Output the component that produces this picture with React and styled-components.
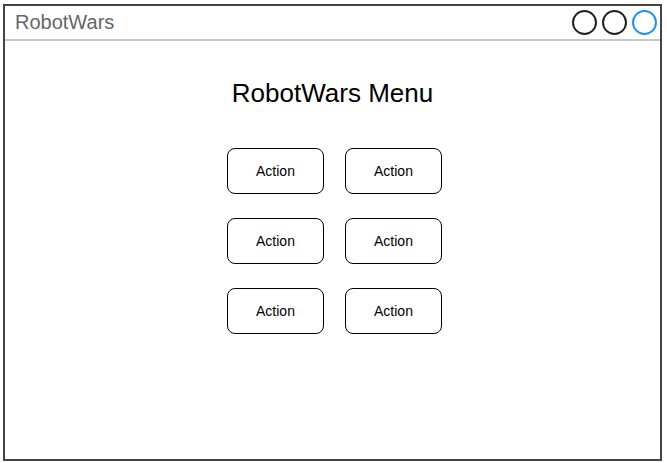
import React from "react";
import styled, { createGlobalStyle } from "styled-components";

const GlobalStyle = createGlobalStyle`
  body {
    margin: 0;
    background: #fff;
    font-family: "Liberation Sans", Arial, sans-serif;
  }
`;

const Page = styled.div`
  padding: 4px 0 0 3px;
`;

const Window = styled.div`
  width: 659px;
  height: 457px;
  box-sizing: border-box;
  border: 2px solid #444;
  display: flex;
  flex-direction: column;
`;

const TitleBar = styled.div`
  height: 35px;
  box-sizing: border-box;
  border-bottom: 2px solid #c8c8c8;
  display: flex;
  align-items: center;
  justify-content: space-between;
  padding: 0 3px 0 10px;
`;

const Title = styled.span`
  font-size: 20px;
  line-height: 23px;
  color: #666;
`;

const Controls = styled.div`
  display: flex;
  gap: 5px;
`;

const Dot = styled.span`
  width: 25px;
  height: 25px;
  box-sizing: border-box;
  border-radius: 50%;
  border: 2px solid ${(p) => (p.$active ? "#1e90ff" : "#222")};
`;

const Body = styled.main`
  flex: 1;
  display: flex;
  flex-direction: column;
  align-items: center;
  padding-top: 37px;
`;

const Heading = styled.h1`
  margin: 0 0 40px;
  font-size: 26px;
  line-height: 30px;
  font-weight: normal;
  color: #000;
`;

const Grid = styled.div`
  display: grid;
  grid-template-columns: repeat(2, 97px);
  grid-auto-rows: 46px;
  column-gap: 21px;
  row-gap: 24px;
  margin-left: 4px;
`;

const ActionButton = styled.button`
  box-sizing: border-box;
  border: 1px solid #000;
  border-radius: 8px;
  background: #fff;
  font-family: "Liberation Sans", Arial, sans-serif;
  font-size: 14px;
  color: #000;
  padding: 0;
  cursor: pointer;
`;

export default function App() {
  const actions = ["Action", "Action", "Action", "Action", "Action", "Action"];

  return (
    <Page>
      <GlobalStyle />
      <Window>
        <TitleBar>
          <Title>RobotWars</Title>
          <Controls>
            <Dot />
            <Dot />
            <Dot $active />
          </Controls>
        </TitleBar>
        <Body>
          <Heading>RobotWars Menu</Heading>
          <Grid>
            {actions.map((label, i) => (
              <ActionButton key={i}>{label}</ActionButton>
            ))}
          </Grid>
        </Body>
      </Window>
    </Page>
  );
}
